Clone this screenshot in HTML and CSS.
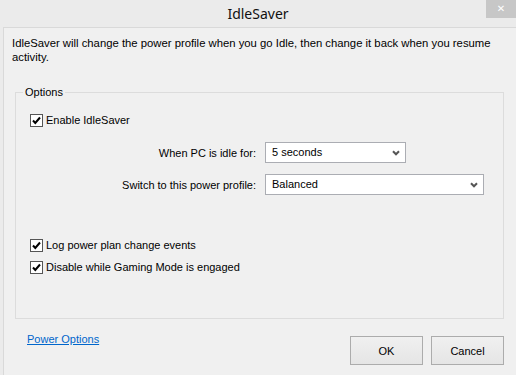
FILE: index.html
```html
<!DOCTYPE html>
<html lang="en">
<head>
    <meta charset="UTF-8">
    <title>IdleSaver</title>
    <link rel="stylesheet" href="styles.css">
</head>
<body>
    <div class="window">
        <div class="titlebar">
            <span class="title">IdleSaver</span>
            <span class="close">&#x2715;</span>
        </div>
        <div class="client">
            <p class="desc">IdleSaver will change the power profile when you go Idle, then change it back when you resume activity.</p>

            <fieldset class="options">
                <legend>Options</legend>

                <label class="check enable"><span class="box"><svg viewBox="0 0 11 11"><path d="M2 5.5 L4.3 8 L9 2.5" /></svg></span>Enable IdleSaver</label>

                <div class="field first">
                    <span class="field-label">When PC is idle for:</span>
                    <div class="combo short">5 seconds<svg class="arrow" viewBox="0 0 8 6"><path d="M1 1.2 L4 4.3 L7 1.2" /></svg></div>
                </div>
                <div class="field">
                    <span class="field-label">Switch to this power profile:</span>
                    <div class="combo long">Balanced<svg class="arrow" viewBox="0 0 8 6"><path d="M1 1.2 L4 4.3 L7 1.2" /></svg></div>
                </div>

                <label class="check log"><span class="box"><svg viewBox="0 0 11 11"><path d="M2 5.5 L4.3 8 L9 2.5" /></svg></span>Log power plan change events</label>
                <label class="check gaming"><span class="box"><svg viewBox="0 0 11 11"><path d="M2 5.5 L4.3 8 L9 2.5" /></svg></span>Disable while Gaming Mode is engaged</label>
            </fieldset>

            <div class="bottom">
                <a class="link" href="#">Power Options</a>
                <div class="buttons">
                    <button>OK</button>
                    <button>Cancel</button>
                </div>
            </div>
        </div>
    </div>
</body>
</html>
```

FILE: styles.css
```css
body {
    margin: 0;
    font-family: "Liberation Sans", Arial, sans-serif;
    font-size: 11px;
    color: #000;
}
.window {
    width: 516px;
    height: 375px;
    overflow: hidden;
    background-color: #ebebeb;
}
.titlebar {
    position: relative;
    height: 27px;
    text-align: center;
}
.title {
    font-family: "Noto Sans", sans-serif;
    font-size: 14px;
    line-height: 27px;
    color: #111;
}
.close {
    position: absolute;
    top: 0;
    right: 0;
    width: 30px;
    height: 18px;
    background-color: #c7c7c7;
    color: #fff;
    font-family: "DejaVu Sans", sans-serif;
    font-size: 10px;
    line-height: 18px;
    text-align: center;
}
.client {
    margin-left: 3px;
    height: 347px;
    padding: 8px 12px 0 8px;
    border-top: 1px solid #d9d9d9;
    border-left: 1px solid #d9d9d9;
    background-color: #f0f0f0;
}
.desc {
    margin: 0;
    line-height: 14px;
    font-size: 11.3px;
}
.options {
    width: 489px;
    margin: 21px 0 0 3px;
    padding: 14px 0 44px 14px;
    border: 1px solid #dcdcdc;
    box-sizing: border-box;
}
.options legend {
    margin-left: -7px;
    padding: 0 2px;
    line-height: 14px;
}
.check {
    display: flex;
    align-items: center;
    height: 14px;
}
.box {
    width: 11px;
    height: 11px;
    margin-right: 3px;
    border: 1px solid #555;
    background-color: #fff;
}
.box svg {
    display: block;
    width: 11px;
    height: 11px;
    fill: none;
    stroke: #000;
    stroke-width: 2;
}
.field {
    display: grid;
    grid-template-columns: 240px auto;
    column-gap: 9px;
    align-items: center;
    margin: 11px 0 0 -14px;
}
.field.first {
    margin-top: 15px;
}
.field-label {
    text-align: right;
}
.combo {
    position: relative;
    height: 19px;
    padding-left: 6px;
    border: 1px solid #abadb3;
    background-color: #fff;
    line-height: 19px;
}
.combo.short {
    width: 133px;
}
.combo.long {
    width: 211px;
}
.arrow {
    position: absolute;
    right: 5px;
    top: 7px;
    width: 8px;
    height: 6px;
    fill: none;
    stroke: #555;
    stroke-width: 2;
}
.log {
    margin-top: 43px;
}
.gaming {
    margin-top: 8px;
}
.bottom {
    display: flex;
    justify-content: space-between;
    align-items: flex-start;
    margin-top: 17px;
}
.link {
    margin: -3px 0 0 15px;
    color: #0066cc;
    line-height: 13px;
}
.buttons {
    display: flex;
    gap: 8px;
}
.buttons button {
    width: 73px;
    height: 29px;
    padding: 0;
    border: 1px solid #acacac;
    background: linear-gradient(#f0f0f0, #e5e5e5);
    font-family: "Liberation Sans", Arial, sans-serif;
    font-size: 11px;
    color: #000;
}
```
